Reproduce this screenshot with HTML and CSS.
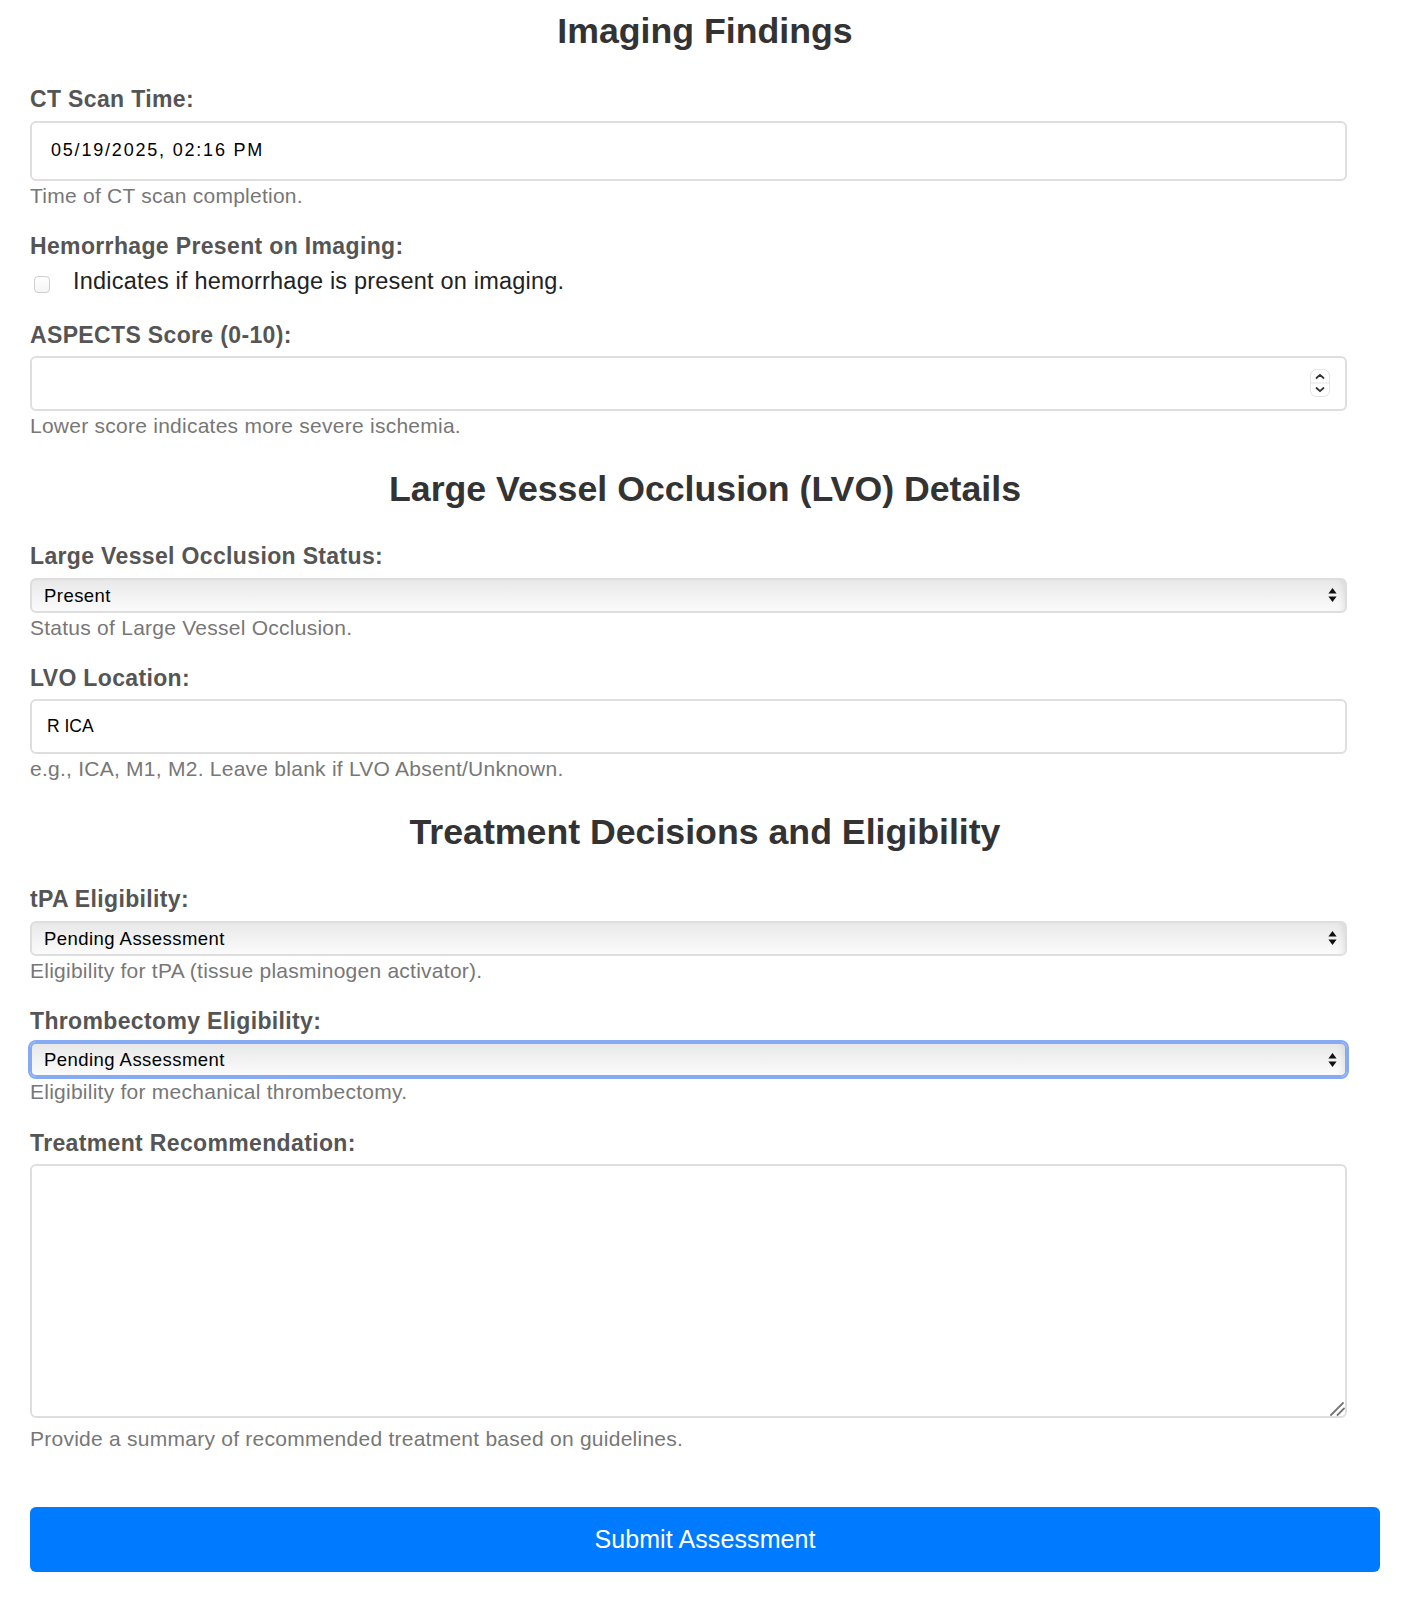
FILE: index.html
```html
<!DOCTYPE html>
<html lang="en">
<head>
<meta charset="utf-8">
<title>Imaging Findings</title>
<link rel="stylesheet" href="styles.css">
</head>
<body>
<form class="form">
  <h2 class="section-title">Imaging Findings</h2>

  <div class="group">
    <label class="label" for="ct">CT Scan Time:</label>
    <input class="control control-date" id="ct" type="text" value="05/19/2025, 02:16 PM">
    <small class="help">Time of CT scan completion.</small>
  </div>

  <div class="group">
    <label class="label">Hemorrhage Present on Imaging:</label>
    <label class="check-row"><input class="check" type="checkbox"><span class="check-text">Indicates if hemorrhage is present on imaging.</span></label>
  </div>

  <div class="group">
    <label class="label" for="aspects">ASPECTS Score (0-10):</label>
    <div class="field-wrap">
      <input class="control control-text" id="aspects" type="text" inputmode="numeric">
      <svg class="spinner" width="20" height="28" viewBox="0 0 20 28" aria-hidden="true">
        <rect x="0.5" y="0.5" width="19" height="27" rx="6" fill="#fff" stroke="#e2e2e2"/>
        <line x1="1" y1="14" x2="19" y2="14" stroke="#e2e2e2"/>
        <path d="M6.5 9 L10 5.8 L13.5 9" fill="none" stroke="#333" stroke-width="1.8" stroke-linecap="round" stroke-linejoin="round"/>
        <path d="M6.5 19 L10 22.2 L13.5 19" fill="none" stroke="#333" stroke-width="1.8" stroke-linecap="round" stroke-linejoin="round"/>
      </svg>
    </div>
    <small class="help">Lower score indicates more severe ischemia.</small>
  </div>

  <h2 class="section-title">Large Vessel Occlusion (LVO) Details</h2>

  <div class="group">
    <label class="label" for="lvo">Large Vessel Occlusion Status:</label>
    <div class="field-wrap">
      <select class="control control-select" id="lvo">
        <option>Present</option>
      </select>
      <svg class="arrows" width="9" height="14" viewBox="0 0 9 14" aria-hidden="true"><path d="M4.5 0 L8.6 5.6 H0.4 Z M4.5 14 L8.6 8.4 H0.4 Z" fill="#111"/></svg>
    </div>
    <small class="help">Status of Large Vessel Occlusion.</small>
  </div>

  <div class="group">
    <label class="label" for="loc">LVO Location:</label>
    <input class="control control-text" id="loc" type="text" value="R ICA">
    <small class="help">e.g., ICA, M1, M2. Leave blank if LVO Absent/Unknown.</small>
  </div>

  <h2 class="section-title">Treatment Decisions and Eligibility</h2>

  <div class="group">
    <label class="label" for="tpa">tPA Eligibility:</label>
    <div class="field-wrap">
      <select class="control control-select" id="tpa">
        <option>Pending Assessment</option>
      </select>
      <svg class="arrows" width="9" height="14" viewBox="0 0 9 14" aria-hidden="true"><path d="M4.5 0 L8.6 5.6 H0.4 Z M4.5 14 L8.6 8.4 H0.4 Z" fill="#111"/></svg>
    </div>
    <small class="help">Eligibility for tPA (tissue plasminogen activator).</small>
  </div>

  <div class="group">
    <label class="label" for="thr">Thrombectomy Eligibility:</label>
    <div class="field-wrap">
      <select class="control control-select is-focused" id="thr">
        <option>Pending Assessment</option>
      </select>
      <svg class="arrows" width="9" height="14" viewBox="0 0 9 14" aria-hidden="true"><path d="M4.5 0 L8.6 5.6 H0.4 Z M4.5 14 L8.6 8.4 H0.4 Z" fill="#111"/></svg>
    </div>
    <small class="help">Eligibility for mechanical thrombectomy.</small>
  </div>

  <div class="group">
    <label class="label" for="rec">Treatment Recommendation:</label>
    <div class="field-wrap area-wrap">
      <textarea class="control control-area" id="rec"></textarea>
      <svg class="grip" width="16" height="16" viewBox="0 0 16 16" aria-hidden="true">
        <path d="M2 15 L14 3 M8.5 15 L15 8.5" fill="none" stroke="#777" stroke-width="1.8" stroke-linecap="round"/>
      </svg>
    </div>
    <small class="help">Provide a summary of recommended treatment based on guidelines.</small>
  </div>

  <button class="submit" type="button">Submit Assessment</button>
</form>
</body>
</html>
```

FILE: styles.css
```css
html, body {
  margin: 0;
  padding: 0;
  background: #ffffff;
}

body {
  font-family: "Liberation Sans", Arial, Helvetica, sans-serif;
  color: #333;
}

.form {
  width: 1350px;
  padding: 0 0 20px 30px;
}

.section-title {
  margin: 29px 0 31px;
  font-size: 35.7px;
  line-height: 42.84px;
  font-weight: bold;
  color: #333;
  text-align: center;
}

.section-title:first-child {
  margin-top: 9.6px;
  margin-bottom: 32px;
}

.group {
  margin-bottom: 23.2px;
}

.label {
  display: block;
  padding-top: 2px;
  margin-bottom: 6.5px;
  font-size: 23px;
  line-height: 27.6px;
  font-weight: bold;
  letter-spacing: 0.35px;
  color: #555;
}

.help {
  display: block;
  margin-top: 2.2px;
  font-size: 21px;
  line-height: 25.2px;
  letter-spacing: 0.25px;
  color: #777;
}

.field-wrap {
  position: relative;
  width: 1317px;
}

.control {
  display: block;
  box-sizing: border-box;
  width: 1317px;
  margin: 0;
  border: 2px solid #dedede;
  border-radius: 6px;
  background: #fff;
  font-family: "Liberation Sans", Arial, Helvetica, sans-serif;
  color: #000;
  outline: none;
}

.control-date {
  height: 60px;
  padding: 0 15px 0 19px;
  font-size: 18px;
  letter-spacing: 1.8px;
}

.control-text {
  height: 55px;
  padding: 0 15px;
  font-size: 17.5px;
}

.control-select {
  -webkit-appearance: none;
  appearance: none;
  height: 35px;
  padding: 0 30px 0 12px;
  font-size: 18.5px;
  letter-spacing: 0.45px;
  background: linear-gradient(to bottom, #e8e8e8 0%, #f3f3f3 55%, #fbfbfb 100%);
  box-shadow: inset -6px 0 6px -4px rgba(0, 0, 0, 0.08);
}

.control-select.is-focused {
  border-color: #86aaf4;
  box-shadow: 0 0 0 2px #86aaf4, inset -6px 0 6px -4px rgba(0, 0, 0, 0.08);
}

.area-wrap {
  margin-bottom: 8.5px;
}

.control-area {
  height: 254px;
  padding: 10px 15px;
  font-size: 17.5px;
  resize: none;
}

.grip {
  position: absolute;
  right: 2px;
  bottom: 2px;
  pointer-events: none;
}

.spinner {
  position: absolute;
  right: 17px;
  top: 13px;
}

.arrows {
  position: absolute;
  right: 10px;
  top: 50%;
  margin-top: -7px;
  pointer-events: none;
}

.check-row {
  display: flex;
  align-items: flex-start;
  padding-bottom: 1.5px;
  font-size: 23.5px;
  line-height: 28.2px;
  letter-spacing: 0.2px;
  color: #222;
}

.check {
  -webkit-appearance: none;
  appearance: none;
  flex: none;
  box-sizing: border-box;
  width: 16px;
  height: 17px;
  margin: 9px 23px 0 4px;
  border: 1px solid #cfcfcf;
  border-radius: 4px;
  background: linear-gradient(to bottom, #ffffff, #f4f4f4);
}

.submit {
  display: block;
  box-sizing: border-box;
  width: 1350px;
  height: 65px;
  margin-top: 55px;
  padding: 0;
  border: none;
  border-radius: 6px;
  background: #007bff;
  color: #fff;
  font-family: "Liberation Sans", Arial, Helvetica, sans-serif;
  font-size: 25px;
  letter-spacing: 0.1px;
  cursor: pointer;
}
```
